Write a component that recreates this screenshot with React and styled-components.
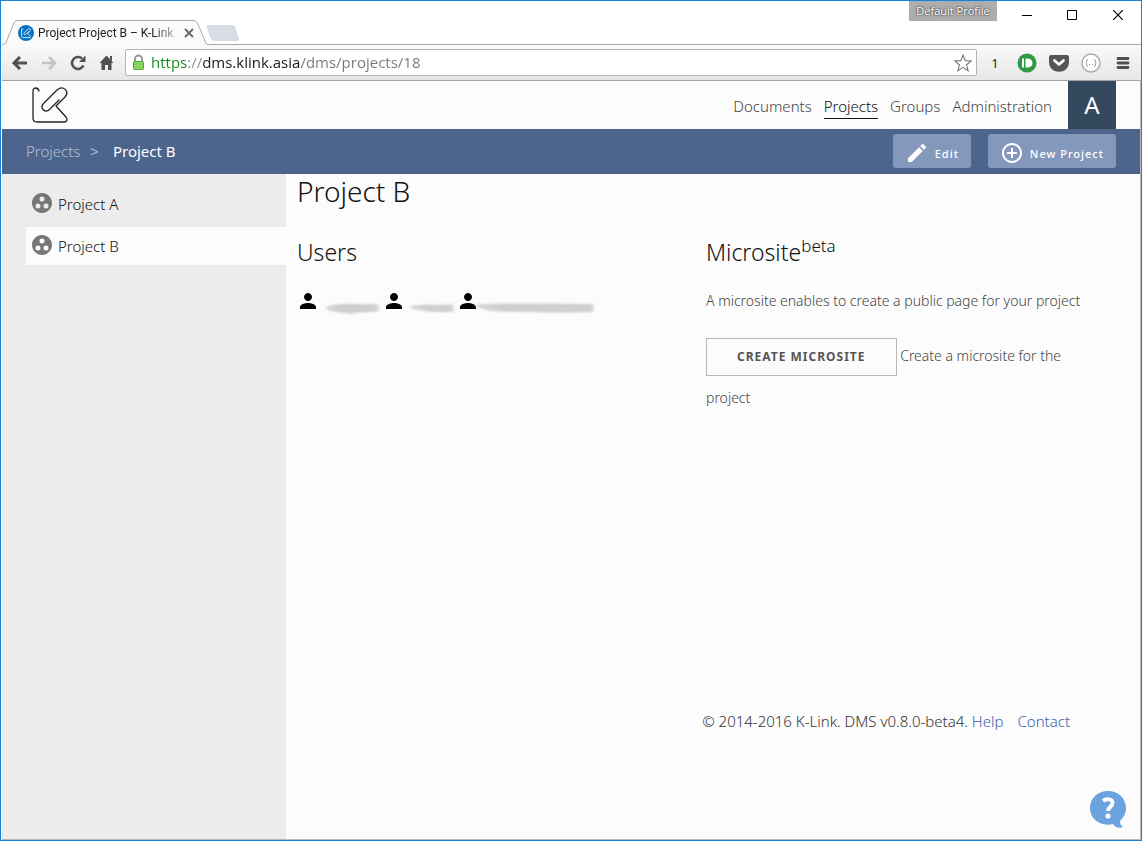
import React from "react";
import styled, { createGlobalStyle } from "styled-components";
import { MdGroupWork, MdPerson, MdEdit, MdControlPoint } from "react-icons/md";

const GlobalStyle = createGlobalStyle`
  *, *::before, *::after { box-sizing: border-box; }
  body {
    margin: 0;
    font-family: "Noto Sans", "Open Sans", sans-serif;
    font-size: 14px;
    color: #222;
    background: #fff;
  }
  h1, h2, p, ul { margin: 0; padding: 0; }
  ul { list-style: none; }
  button, input { font: inherit; }
  svg { display: block; flex: none; }
`;

const BrowserWindow = styled.div`
  display: flex;
  flex-direction: column;
  min-height: 100vh;
  border: 1px solid #1883d7;
  padding-left: 1px;
`;

const TitleBar = styled.header`
  display: flex;
  align-items: flex-end;
  height: 44px;
  border-bottom: 1px solid #a8a8a8;
`;

const Tab = styled.div`
  position: relative;
  display: flex;
  align-items: center;
  width: 206px;
  height: 25px;
  margin-bottom: -1px;
  padding-left: 16px;
`;

const TabShape = styled.svg`
  position: absolute;
  inset: 0;
`;

const TabTitle = styled.span`
  position: relative;
  flex: none;
  width: 139px;
  margin-left: 4px;
  white-space: nowrap;
  font-family: Roboto, sans-serif;
  font-size: 12px;
  line-height: 20px;
  color: #222;
  mask-image: linear-gradient(to right, #000 115px, transparent 145px);
`;

const PlainButton = styled.button`
  position: relative;
  display: flex;
  align-items: center;
  justify-content: center;
  flex: none;
  width: ${(p) => p.$width}px;
  height: ${(p) => p.$height || 24}px;
  padding: 0;
  border: 0;
  background: none;
  color: #222;
  font-size: 13px;
`;

const Profile = styled.span`
  align-self: flex-start;
  flex: none;
  width: 88px;
  height: 20px;
  margin-left: auto;
  background: #adadad;
  color: #fff;
  font-family: "Open Sans", sans-serif;
  font-size: 11px;
  line-height: 20px;
  text-align: center;
  text-shadow: 0 0 2px #444, 0 0 2px #444;
`;

const WindowControls = styled.div`
  display: flex;
  align-self: flex-start;
  margin-left: 7px;
`;

const Toolbar = styled.div`
  display: flex;
  align-items: center;
  height: 36px;
  padding: 0 2px 0 3px;
  border-bottom: 1px solid #a3a3a3;
  background: linear-gradient(#fafafa, #e6e6e6);
`;

const AddressBar = styled.label`
  display: flex;
  flex: 1;
  align-items: center;
  min-width: 0;
  height: 27px;
  margin-left: 4px;
  padding: 0 4px 0 6px;
  border: 1px solid #b4b4b4;
  border-radius: 2px;
  background: #fff;
`;

const AddressInput = styled.input`
  flex: 1;
  min-width: 0;
  height: 24px;
  margin-left: 6px;
  padding: 0 0 2px;
  border: 0;
  outline: 0;
  font-family: "Open Sans", sans-serif;
  font-size: 15px;
  color: #222;
  background: linear-gradient(to right, #0b8a1c 37px, #888 37px, #888 52px, #1a1a1a 52px, #1a1a1a 150px, #777 150px);
  background-clip: text;
  -webkit-background-clip: text;
  -webkit-text-fill-color: transparent;
`;

const Extensions = styled.div`
  display: flex;
  margin-left: 2px;
`;

const Page = styled.div`
  display: flex;
  flex: 1;
  flex-direction: column;
  border-right: 1px solid #b8b8b8;
  border-bottom: 1px solid #b8b8b8;
  background: #fcfcfc;
`;

const SiteHeader = styled.header`
  display: flex;
  align-items: center;
  justify-content: space-between;
  height: 48px;
  padding: 0 24px 0 28px;
`;

const LogoLink = styled.a`
  color: #222;
`;

const SiteNav = styled.nav`
  display: flex;
  align-items: center;
  gap: 12px;
`;

const NavLink = styled.a`
  padding: 4px 0 2px;
  border-bottom: 1px solid ${(p) => (p.$active ? "#111" : "transparent")};
  color: ${(p) => (p.$active ? "#111" : "#444")};
  font-weight: 300;
  font-size: 15px;
  line-height: 20px;
  text-decoration: none;
`;

const Avatar = styled.button`
  width: 48px;
  height: 48px;
  margin-left: 4px;
  padding: 0 0 2px;
  border: 0;
  background: #34495e;
  color: #fff;
  font-size: 24px;
`;

const ActionBar = styled.div`
  display: flex;
  align-items: flex-start;
  justify-content: space-between;
  height: 45px;
  padding: 5px 24px 0;
  background: #4d658d;
`;

const Breadcrumb = styled.nav`
  display: flex;
  color: #b4c0d6;
  font-size: 15px;
  line-height: 34px;

  a { color: inherit; font-weight: 300; text-decoration: none; }
  span { margin: 0 14px 0 10px; }
  strong { color: #fff; font-weight: 400; }
`;

const Actions = styled.div`
  display: flex;
  gap: 17px;
`;

const ActionButton = styled.button`
  display: flex;
  align-items: center;
  gap: 6px;
  height: 34px;
  padding: 4px 12px 0;
  border: 0;
  border-radius: 3px;
  background: #8498bc;
  color: #fff;
  font-size: 11px;
  font-weight: 500;
  letter-spacing: 1px;
`;

const Body = styled.div`
  display: flex;
  flex: 1;
`;

const Sidebar = styled.aside`
  flex: 0 0 284px;
  padding: 11px 0 0 24px;
  background: #ececec;
`;

const ProjectItem = styled.li`
  margin-bottom: 4px;
  background: ${(p) => (p.$active ? "#fcfcfc" : "transparent")};
`;

const ProjectLink = styled.a`
  display: flex;
  align-items: center;
  gap: 4px;
  height: 38px;
  padding-left: 4px;
  color: #111;
  font-size: 15px;
  font-weight: 300;
  text-decoration: none;

  svg { color: #777; margin-bottom: 2px; }
`;

const Main = styled.main`
  display: flex;
  flex: 1;
  flex-direction: column;
  padding: 0 44px 0 11px;
`;

const PageTitle = styled.h1`
  color: #111;
  font-size: 28px;
  font-weight: 300;
  line-height: 34px;
`;

const Columns = styled.div`
  display: grid;
  grid-template-columns: 1fr 1fr;
  gap: 19px;
  margin-top: 26px;
`;

const SectionTitle = styled.h2`
  color: #111;
  font-size: 23px;
  font-weight: 300;
  line-height: 36px;

  sup { font-size: 17px; line-height: 0; }
`;

const Users = styled.ul`
  display: flex;
  margin: 19px 0 0 -1px;
`;

const User = styled.li`
  display: flex;
  color: #000;

  svg + svg { margin-top: 10px; }
`;

const Text = styled.p`
  margin-top: ${(p) => p.$top}px;
  color: #444;
  font-size: 14px;
  font-weight: 300;
  line-height: 42px;
`;

const OutlineButton = styled.button`
  height: 38px;
  padding: 0 30px;
  border: 1px solid #b8b8b8;
  background: transparent;
  color: #555;
  font-size: 12px;
  font-weight: 700;
  line-height: 36px;
  letter-spacing: 1px;
  text-transform: uppercase;
`;

const Footer = styled.footer`
  margin-top: auto;
  padding: 20px 26px 108px 0;
  color: #333;
  font-size: 15px;
  font-weight: 300;
  line-height: 20px;
  text-align: right;

  a { color: #3a5fae; text-decoration: none; }
  a + a { margin-left: 14px; }
`;

const HelpButton = styled.button`
  position: fixed;
  right: 15px;
  bottom: 12px;
  padding: 0;
  border: 0;
  background: none;
`;

const KLinkMark = () => (
  <path
    d="M9 6C8 2 3 2 3 6V33Q3 37 7 37H34C37 37 38 34 36 32L26 21L35 12C40 6 33 0 27 5L14 18C9 23 15 29 20 24L29 15"
    fill="none"
    stroke="currentColor"
    strokeLinejoin="round"
    strokeLinecap="round"
  />
);

const FaviconSvg = styled.svg`
  position: relative;
  color: #fff;
`;

const Favicon = () => (
  <FaviconSvg width="16" height="16" viewBox="0 0 40 40">
    <circle cx="20" cy="20" r="20" fill="#0a72c4" />
    <g strokeWidth="3" transform="translate(7 7) scale(.66)">
      <KLinkMark />
    </g>
  </FaviconSvg>
);

const CHROME_ICONS = {
  back: <path d="M17 10H4M10 4L4 10L10 16" fill="none" stroke="#505050" strokeWidth="3" />,
  forward: <path d="M3 10H16M10 4L16 10L10 16" fill="none" stroke="#c4c4c4" strokeWidth="2.6" />,
  reload: (
    <g>
      <path d="M14 5.5A6 6 0 1 0 15.5 12.5" fill="none" stroke="#505050" strokeWidth="2.6" />
      <path d="M17.5 2.5V9H11Z" fill="#505050" />
    </g>
  ),
  home: <path d="M9.500 2.500L16.500 10H14.500V17H11V12H8V17H4.500V10H2.500ZM13 3H15V8L13 6Z" fill="#505050" />,
};

const ChromeIcon = ({ name }) => (
  <svg width="20" height="20" viewBox="0 0 20 20">{CHROME_ICONS[name]}</svg>
);

const SMUDGES = [
  { width: 62, d: "M5 9C14 3 30 5 58 5L59 12C45 14 36 13 32 15C24 14 12 14 5 9Z" },
  { width: 50, d: "M3 8C12 4 26 7 47 5L48 13C30 13 13 13 3 8Z" },
  { width: 118, d: "M-6 6C20 3 70 5 114 5L113 13C80 14 34 13 10 12C6 10 -2 9 -6 6Z" },
];

const Smudge = ({ width, d }) => (
  <svg width={width} height="18" viewBox={`0 0 ${width} 18`} overflow="visible" aria-hidden="true">
    <g filter="url(#smear)">
      <path d={d} fill="#d2d4d3" />
      <path d={`M14 8L${width - 8} 7M18 11L${width - 8} 12`} stroke="#c0c3c1" />
    </g>
  </svg>
);

export default function App() {
  return (
    <BrowserWindow>
      <GlobalStyle />
      <TitleBar>
        <Tab>
          <TabShape width="206" height="25" viewBox="0 0 206 25">
            <path
              d="M0 24.5C3 24.5 4 23 5 20L11 5C12 2 13 .5 16 .5H191C194 .5 195 2 196 4L203 21C204 24 205 24.5 206 24.5V25H0Z"
              fill="#fafafa"
            />
            <path
              d="M0 24.5C3 24.5 4 23 5 20L11 5C12 2 13 .5 16 .5H191C194 .5 195 2 196 4L203 21C204 24 205 24.5 206 24.5"
              fill="none"
              stroke="#a8a8a8"
            />
          </TabShape>
          <Favicon />
          <TabTitle>Project Project B – K-Link D</TabTitle>
          <PlainButton $width={24} aria-label="Close tab">
            <svg width="10" height="10" viewBox="0 0 10 10">
              <path d="M1 1L9 9M9 1L1 9" stroke="#666" strokeWidth="1.8" />
            </svg>
          </PlainButton>
        </Tab>
        <PlainButton $width={30} $height={22} aria-label="New tab">
          <svg width="34" height="16" viewBox="-2 0 34 16">
            <path d="M1 0H23C26 0 27 1 28 4L31 13C31 15 31 16 29 16H7C4 16 3 14 2 12L-1 3Q-2 0 1 0Z" fill="#d8dde5" />
          </svg>
        </PlainButton>
        <Profile>Default Profile</Profile>
        <WindowControls>
          <PlainButton $width={46} $height={28} aria-label="Minimize">
            <svg width="10" height="10" viewBox="0 0 10 10"><path d="M0 5.5H10" stroke="#000" /></svg>
          </PlainButton>
          <PlainButton $width={44} $height={28} aria-label="Maximize">
            <svg width="10" height="10" viewBox="0 0 10 10"><path d="M.5 .5H9.5V9.5H.5Z" fill="none" stroke="#000" /></svg>
          </PlainButton>
          <PlainButton $width={47} $height={28} aria-label="Close">
            <svg width="10" height="10" viewBox="0 0 10 10"><path d="M0 0L10 10M10 0L0 10" stroke="#000" strokeWidth="1.2" /></svg>
          </PlainButton>
        </WindowControls>
      </TitleBar>

      <Toolbar>
        <PlainButton $width={29} aria-label="Back"><ChromeIcon name="back" /></PlainButton>
        <PlainButton $width={29} aria-label="Forward"><ChromeIcon name="forward" /></PlainButton>
        <PlainButton $width={29} aria-label="Reload"><ChromeIcon name="reload" /></PlainButton>
        <PlainButton $width={29} aria-label="Home"><ChromeIcon name="home" /></PlainButton>
        <AddressBar>
          <svg width="13" height="18" viewBox="0 0 13 18">
            <path d="M3 8V5A3.5 3.5 0 0 1 10 5V8" fill="none" stroke="#999" strokeWidth="2" />
            <rect x="1.5" y="7.5" width="10" height="8" rx="1" fill="#8edb6c" stroke="#4ca530" />
            <path d="M2 10H11M2 13H11" stroke="#74c653" />
          </svg>
          <AddressInput aria-label="Address" defaultValue="https://dms.klink.asia/dms/projects/18" />
          <svg width="18" height="18" viewBox="0 0 18 18">
            <path d="M9 1L11.2 6.6L17.2 7L12.6 10.8L14.1 16.7L9 13.4L3.9 16.7L5.4 10.8L.8 7L6.8 6.6Z" fill="#fff" stroke="#777" strokeWidth="1.1" />
          </svg>
        </AddressBar>
        <Extensions>
          <PlainButton $width={32}>1</PlainButton>
          <PlainButton $width={32} aria-label="Pushbullet">
            <svg width="20" height="20" viewBox="0 0 20 20">
              <circle cx="10" cy="10" r="9.5" fill="#2f9943" />
              <path d="M5 5.5H7V14.5H5ZM8.5 5.5H11C17 5.5 17 14.5 11 14.5H8.5Z" fill="#fff" />
            </svg>
          </PlainButton>
          <PlainButton $width={32} aria-label="Pocket">
            <svg width="20" height="18" viewBox="0 0 20 18">
              <path d="M2 1H18Q20 1 20 3V8C20 21 0 21 0 8V3Q0 1 2 1Z" fill="#555" />
              <path d="M5.5 6.5L10 10.5L14.5 6.5" fill="none" stroke="#fff" strokeWidth="2.8" strokeLinecap="round" strokeLinejoin="round" />
            </svg>
          </PlainButton>
          <PlainButton $width={32} aria-label="JSON viewer">
            <svg width="20" height="20" viewBox="0 0 20 20">
              <circle cx="10" cy="10" r="9" fill="#fff" stroke="#aaa" strokeWidth="1.4" />
              <path d="M7 6.5C5 6.5 6 9 5 10C6 11 5 13.5 7 13.5M13 6.5C15 6.5 14 9 15 10C14 11 15 13.5 13 13.5M8 11.5H9M11 11.5H12" fill="none" stroke="#999" />
            </svg>
          </PlainButton>
          <PlainButton $width={32} aria-label="Menu">
            <svg width="14" height="14" viewBox="0 0 14 14">
              <path d="M2 2.500H12M2 7H12M2 11.500H12" stroke="#505050" strokeWidth="2.800" strokeLinecap="round" />
            </svg>
          </PlainButton>
        </Extensions>
      </Toolbar>

      <Page>
        <SiteHeader>
          <LogoLink href="#" aria-label="K-Link">
            <svg width="40" height="40" viewBox="0 0 40 40" strokeWidth="1.3"><KLinkMark /></svg>
          </LogoLink>
          <SiteNav>
            <NavLink href="#">Documents</NavLink>
            <NavLink href="#" $active>Projects</NavLink>
            <NavLink href="#">Groups</NavLink>
            <NavLink href="#">Administration</NavLink>
            <Avatar>A</Avatar>
          </SiteNav>
        </SiteHeader>

        <ActionBar>
          <Breadcrumb>
            <a href="#">Projects</a>
            <span>&gt;</span>
            <strong>Project B</strong>
          </Breadcrumb>
          <Actions>
            <ActionButton><MdEdit size={24} />Edit</ActionButton>
            <ActionButton><MdControlPoint size={24} />New Project</ActionButton>
          </Actions>
        </ActionBar>

        <Body>
          <Sidebar>
            <ul>
              <ProjectItem>
                <ProjectLink href="#"><MdGroupWork size={24} />Project A</ProjectLink>
              </ProjectItem>
              <ProjectItem $active>
                <ProjectLink href="#"><MdGroupWork size={24} />Project B</ProjectLink>
              </ProjectItem>
            </ul>
          </Sidebar>
          <Main>
            <PageTitle>Project B</PageTitle>
            <Columns>
              <section>
                <SectionTitle>Users</SectionTitle>
                <svg width="0" height="0" aria-hidden="true">
                  <filter id="smear" x="-10%" y="-30%" width="120%" height="160%">
                    <feGaussianBlur stdDeviation="1.8 .8" />
                  </filter>
                </svg>
                <Users>
                  {SMUDGES.map((s) => (
                    <User key={s.width}>
                      <MdPerson size={24} />
                      <Smudge {...s} />
                    </User>
                  ))}
                </Users>
              </section>
              <section>
                <SectionTitle>Microsite<sup>beta</sup></SectionTitle>
                <Text $top={10}>A microsite enables to create a public page for your project</Text>
                <Text $top={13}>
                  <OutlineButton>Create Microsite</OutlineButton> Create a microsite for the project
                </Text>
              </section>
            </Columns>
            <Footer>
              © 2014-2016 K-Link. DMS v0.8.0-beta4. <a href="#">Help</a><a href="#">Contact</a>
            </Footer>
          </Main>
        </Body>
      </Page>

      <HelpButton aria-label="Help">
        <svg width="38" height="39" viewBox="0 0 38 39">
          <path d="M19 1C29 1 37 8 37 18C37 24 34 28 31 31C31 34 32 36 34 37C30 39 26 37 24 34C11 37 1 29 1 18C1 8 9 1 19 1Z" fill="#6aa3df" />
          <path d="M14 11C17 8.500 23.500 8.500 23.500 13C23.500 16.500 19 17 19 21" fill="none" stroke="#fff" strokeWidth="4" />
          <circle cx="19" cy="26" r="2.600" fill="#fff" />
        </svg>
      </HelpButton>
    </BrowserWindow>
  );
}
